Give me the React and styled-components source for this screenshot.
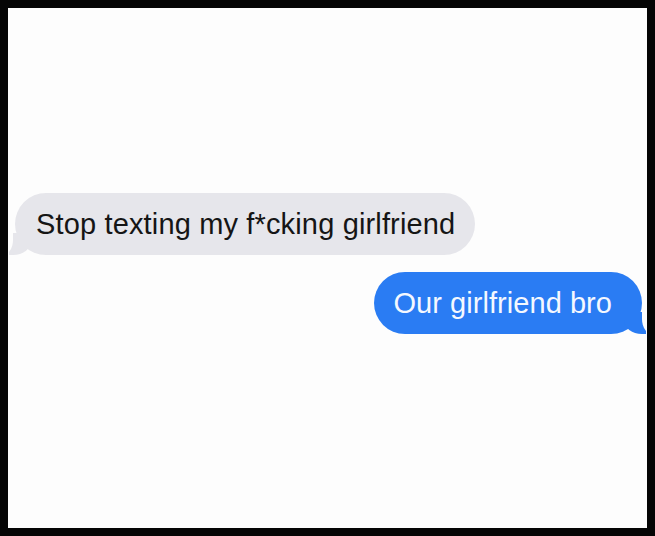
import React from 'react';
import styled, {createGlobalStyle} from 'styled-components';

const GlobalStyle = createGlobalStyle`
  html, body {
    margin: 0;
    padding: 0;
    background: #000;
  }
  body {
    font-family: "Liberation Sans", Arial, sans-serif;
  }
`

const Frame = styled.div`
  width: 655px;
  height: 536px;
  box-sizing: border-box;
  border: 8px solid #050505;
  background: #fdfdfd;
  overflow: hidden;
`

const Thread = styled.div`
  display: flex;
  flex-direction: column;
  gap: 17px;
  padding: 185px 5px 0 7px;
`

const Bubble = styled.div`
  position: relative;
  align-self: ${p => p.$mine ? 'flex-end' : 'flex-start'};
  box-sizing: border-box;
  height: 62px;
  display: flex;
  align-items: center;
  padding: ${p => p.$mine ? '0 30px 0 20px' : '0 20px 0 21px'};
  border-radius: 31px;
  background: ${p => p.$mine ? '#2a7cf3' : '#e6e6eb'};
  color: ${p => p.$mine ? '#f4f8ff' : '#151515'};
  font-size: 29px;
  letter-spacing: ${p => p.$mine ? '0.05px' : '0.15px'};

  &::after {
    content: '';
    position: absolute;
    bottom: 0;
    ${p => p.$mine ? 'right: -4px;' : 'left: -6px;'}
    width: 22px;
    height: 22px;
    background: inherit;
    ${p => p.$mine
      ? 'border-bottom-left-radius: 18px 14px;'
      : 'border-bottom-right-radius: 18px 14px;'}
  }

  &::before {
    content: '';
    position: absolute;
    bottom: -1px;
    ${p => p.$mine ? 'right: -12px;' : 'left: -14px;'}
    width: 12px;
    height: 24px;
    background: #fdfdfd;
    z-index: 1;
    ${p => p.$mine
      ? 'border-bottom-left-radius: 12px 16px;'
      : 'border-bottom-right-radius: 12px 16px;'}
  }
`

const Text = styled.span`
  position: relative;
  z-index: 2;
  white-space: nowrap;
`

const messages = [
  {id: 1, mine: false, text: 'Stop texting my f*cking girlfriend'},
  {id: 2, mine: true, text: 'Our girlfriend bro'}
]

export default function App() {
  return (
    <>
      <GlobalStyle/>
      <Frame>
        <Thread>
          {messages.map(m => (
            <Bubble key={m.id} $mine={m.mine}>
              <Text>{m.text}</Text>
            </Bubble>
          ))}
        </Thread>
      </Frame>
    </>
  );
}
